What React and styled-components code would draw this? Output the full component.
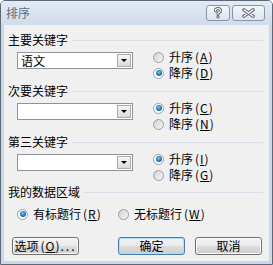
import styled, { createGlobalStyle } from 'styled-components';

const GlobalStyle = createGlobalStyle`
  html, body {
    margin: 0;
    padding: 0;
    background: #ffffff;
  }
  body {
    font-family: "Noto Sans CJK SC", "Liberation Sans", sans-serif;
  }
`;

const Window = styled.div`
  box-sizing: border-box;
  width: 273px;
  height: 265px;
  display: flex;
  flex-direction: column;
  border: 1px solid #5b6877;
  border-radius: 5px 5px 0 0;
  background: #cbd8e7;
  padding: 0 3px 3px;
`;

const TitleBar = styled.div`
  height: 24px;
  margin: 0 -3px;
  padding: 0 7px 0 5px;
  display: flex;
  align-items: center;
  justify-content: space-between;
  border-radius: 4px 4px 0 0;
  background: linear-gradient(#e3ebf4, #d0dcea);
`;

const Title = styled.span`
  font-size: 12px;
  line-height: 14px;
  color: #5d6c7c;
`;

const CaptionButtons = styled.div`
  display: flex;
  gap: 2px;
  align-items: center;
`;

const CaptionButton = styled.div`
  box-sizing: border-box;
  width: ${(p) => p.$width}px;
  height: 16px;
  display: flex;
  align-items: center;
  justify-content: center;
  border: 1px solid #8695a7;
  border-radius: 3px;
  background: linear-gradient(#f4f7fa, #dbe3ec);
`;

const Client = styled.div`
  flex: 1;
  display: flex;
  flex-direction: column;
  padding: 8px 6px 0 4px;
  background: #f0f0f0;
`;

const SectionHeader = styled.div`
  height: 14px;
  margin-top: ${(p) => p.$top || 0}px;
  display: flex;
  align-items: center;
  gap: 4px;
  font-size: 12px;
  line-height: 14px;
  color: #000;

  &::after {
    content: '';
    flex: 1;
    height: 1px;
    background: #d7dfe8;
  }
`;

const GroupBody = styled.div`
  margin-top: 2px;
  padding-left: 9px;
  display: flex;
  align-items: flex-start;
`;

const Combo = styled.div`
  box-sizing: border-box;
  width: 116px;
  height: 17px;
  margin-top: 3px;
  padding: 0 1px 0 3px;
  display: flex;
  align-items: center;
  justify-content: space-between;
  border: 1px solid #8f9399;
  background: #ffffff;
  font-size: 12px;
  line-height: 14px;
  color: #000;
`;

const DropButton = styled.div`
  box-sizing: border-box;
  width: 14px;
  height: 13px;
  display: flex;
  align-items: center;
  justify-content: center;
  border: 1px solid #a9adb2;
  background: linear-gradient(#f6f6f6, #dadada);

  &::after {
    content: '';
    border-left: 3px solid transparent;
    border-right: 3px solid transparent;
    border-top: 3px solid #000;
  }
`;

const RadioColumn = styled.div`
  margin-left: 20px;
  display: flex;
  flex-direction: column;
`;

const RadioRow = styled.div`
  height: 16px;
  width: ${(p) => (p.$width ? `${p.$width}px` : 'auto')};
  display: flex;
  align-items: center;
  gap: 5px;
  font-size: 12px;
  line-height: 14px;
  color: #000;
`;

const RadioDot = styled.span`
  box-sizing: border-box;
  width: 11px;
  height: 11px;
  flex: none;
  display: flex;
  align-items: center;
  justify-content: center;
  border: 1px solid #9a9da1;
  border-radius: 50%;
  background: ${(p) =>
    p.$on
      ? '#ffffff'
      : 'linear-gradient(135deg, #cfd1d3, #f7f7f7)'};

  &::after {
    content: '';
    display: ${(p) => (p.$on ? 'block' : 'none')};
    width: 6px;
    height: 6px;
    border-radius: 50%;
    background: radial-gradient(circle at 45% 40%, #7cc8f2 0, #1d73b5 55%, #0b3f70 100%);
  }
`;

const Mnemonic = styled.span`
  margin-left: 2px;
  letter-spacing: 1px;
`;

const Key = styled.u`
  text-underline-offset: 1px;
`;

const Dots = styled.span`
  letter-spacing: 2px;
`;

const GroupRadios = styled.div`
  margin-top: 7px;
  padding-left: 9px;
  display: flex;
`;

const ButtonRow = styled.div`
  margin: 15px 1px 0 4px;
  display: flex;
  gap: 10px;
`;

const Button = styled.button`
  box-sizing: border-box;
  width: 67px;
  height: 18px;
  padding: 0;
  margin-left: ${(p) => (p.$push ? 'auto' : '0')};
  font-family: inherit;
  font-size: 12px;
  line-height: 14px;
  color: #000;
  border: 1px solid ${(p) => (p.$default ? '#3c7fb1' : '#707070')};
  border-radius: 3px;
  background: linear-gradient(#f2f2f2 0%, #ebebeb 50%, #dddddd 50%, #cfcfcf 100%);
  box-shadow: inset 0 0 0 1px ${(p) => (p.$default ? '#b4ddf6' : '#fbfbfb')};
`;

function HelpIcon() {
  return (
    <svg width="10" height="12" viewBox="0 0 10 12">
      <g fill="none" strokeLinecap="round" strokeLinejoin="round">
        <path d="M2.5 3.8 Q2.5 1.5 5 1.5 Q7.5 1.5 7.5 3.6 Q7.5 5.2 5 6 L5 7.2" stroke="#5c6878" strokeWidth="3" />
        <path d="M2.5 3.8 Q2.5 1.5 5 1.5 Q7.5 1.5 7.5 3.6 Q7.5 5.2 5 6 L5 7.2" stroke="#ffffff" strokeWidth="1.1" />
      </g>
      <circle cx="5" cy="9.8" r="1.6" fill="#5c6878" />
      <circle cx="5" cy="9.8" r="0.6" fill="#ffffff" />
    </svg>
  );
}

function CloseIcon() {
  return (
    <svg width="13" height="10" viewBox="0 0 13 10">
      <g fill="none" strokeLinecap="round">
        <path d="M2 1.8 L11 8.2 M11 1.8 L2 8.2" stroke="#5c6878" strokeWidth="3.4" />
        <path d="M2 1.8 L11 8.2 M11 1.8 L2 8.2" stroke="#ffffff" strokeWidth="1.4" />
      </g>
    </svg>
  );
}

function Radio({ on, label, accessKey, width }) {
  return (
    <RadioRow $width={width}>
      <RadioDot $on={on} />
      <span>
        {label}
        <Mnemonic>
          (<Key>{accessKey}</Key>)
        </Mnemonic>
      </span>
    </RadioRow>
  );
}

function SortGroup({ title, value, top, asc, keys }) {
  return (
    <>
      <SectionHeader $top={top}>{title}</SectionHeader>
      <GroupBody>
        <Combo>
          <span>{value}</span>
          <DropButton />
        </Combo>
        <RadioColumn>
          <Radio on={asc} label="升序" accessKey={keys[0]} />
          <Radio on={!asc} label="降序" accessKey={keys[1]} />
        </RadioColumn>
      </GroupBody>
    </>
  );
}

export default function App() {
  return (
    <>
      <GlobalStyle />
      <Window>
        <TitleBar>
          <Title>排序</Title>
          <CaptionButtons>
            <CaptionButton $width={24}>
              <HelpIcon />
            </CaptionButton>
            <CaptionButton $width={33}>
              <CloseIcon />
            </CaptionButton>
          </CaptionButtons>
        </TitleBar>
        <Client>
          <SortGroup title="主要关键字" value="语文" asc={false} keys={['A', 'D']} />
          <SortGroup title="次要关键字" value="" top={3} asc keys={['C', 'N']} />
          <SortGroup title="第三关键字" value="" top={3} asc keys={['I', 'G']} />
          <SectionHeader $top={2}>我的数据区域</SectionHeader>
          <GroupRadios>
            <Radio on label="有标题行" accessKey="R" width={101} />
            <Radio label="无标题行" accessKey="W" />
          </GroupRadios>
          <ButtonRow>
            <Button>
              选项<Mnemonic>(<Key>O</Key>)</Mnemonic><Dots>...</Dots>
            </Button>
            <Button $default $push>
              确定
            </Button>
            <Button>取消</Button>
          </ButtonRow>
        </Client>
      </Window>
    </>
  );
}
